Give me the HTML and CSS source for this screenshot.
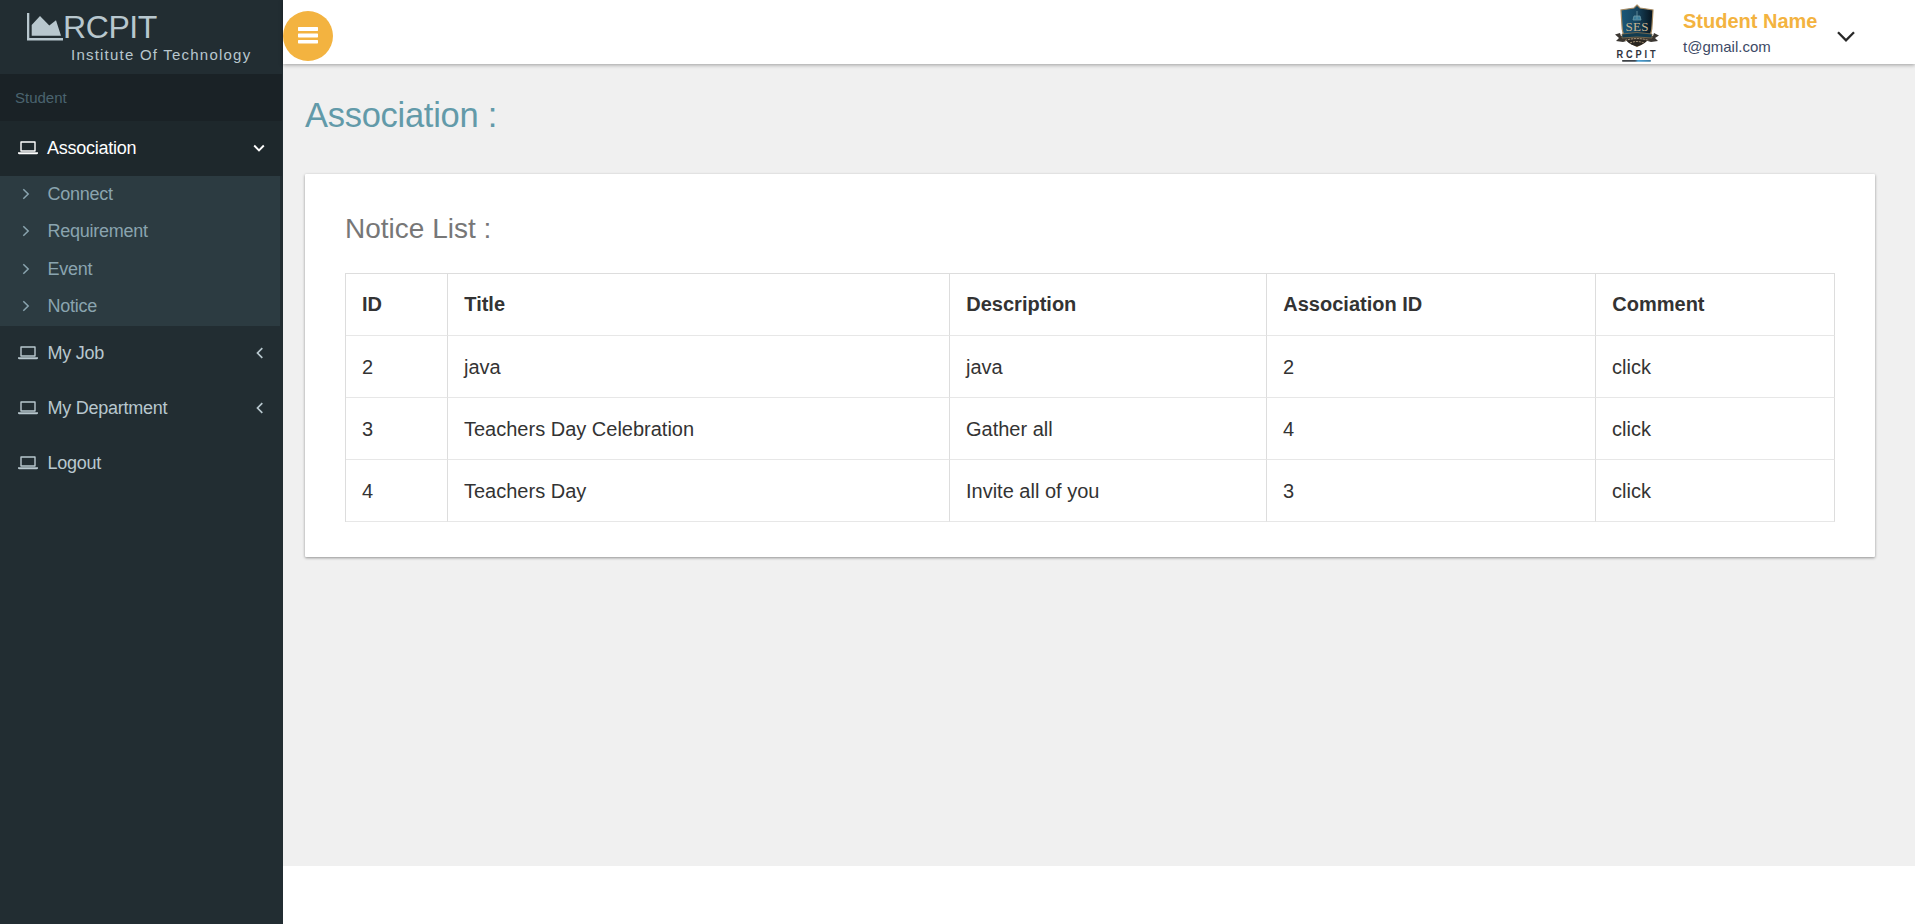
FILE: index.html
```html
<!DOCTYPE html>
<html lang="en">
<head>
<meta charset="utf-8">
<title>RCPIT - Association</title>
<link rel="stylesheet" href="styles.css">
</head>
<body>
<svg class="sprite" width="0" height="0">
  <symbol id="laptop" viewBox="0 0 20 14"><path d="M3 1h14v9H3z" fill="none" stroke="currentColor" stroke-width="1.4" stroke-linejoin="round"/><path d="M0 11.2h20v1c0 .6-.9 1-2 1H2c-1.100 0-2-.4-2-1z" fill="currentColor"/></symbol>
  <symbol id="right" viewBox="0 0 8 12"><path d="M1.300 1.200 6.200 6 1.300 10.800" fill="none" stroke="currentColor" stroke-width="1.500"/></symbol>
  <symbol id="left" viewBox="0 0 8 12"><path d="M6.300 1.200 1.500 6 6.300 10.800" fill="none" stroke="currentColor" stroke-width="1.700"/></symbol>
  <symbol id="down" viewBox="0 0 12 8"><path d="M1.200 1.500 6 6.300 10.800 1.500" fill="none" stroke="currentColor" stroke-width="1.900"/></symbol>
</svg>
<div class="app">
  <aside class="sidebar">
    <div class="brand">
      <div class="brand-name">
        <svg class="brand-icon" viewBox="0 0 36 28"><path d="M0 0h2.300v25H36v2.500H0z"/><path d="M4.700 22.800V12L13 3l9.300 9.500 6.700-5.300 5 15.600z"/></svg><span>RCPIT</span>
      </div>
      <div class="brand-sub">Institute Of Technology</div>
    </div>
    <div class="role">Student</div>
    <nav>
      <a class="item active"><svg class="laptop"><use href="#laptop"/></svg><span class="label">Association</span><svg class="caret-down"><use href="#down"/></svg></a>
      <div class="submenu">
        <a class="sub"><svg class="caret"><use href="#right"/></svg><span>Connect</span></a>
        <a class="sub"><svg class="caret"><use href="#right"/></svg><span>Requirement</span></a>
        <a class="sub"><svg class="caret"><use href="#right"/></svg><span>Event</span></a>
        <a class="sub"><svg class="caret"><use href="#right"/></svg><span>Notice</span></a>
      </div>
      <a class="item"><svg class="laptop"><use href="#laptop"/></svg><span class="label">My Job</span><svg class="caret"><use href="#left"/></svg></a>
      <a class="item"><svg class="laptop"><use href="#laptop"/></svg><span class="label">My Department</span><svg class="caret"><use href="#left"/></svg></a>
      <a class="item"><svg class="laptop"><use href="#laptop"/></svg><span class="label">Logout</span></a>
    </nav>
  </aside>
  <div class="page">
    <header class="topbar">
      <button class="toggle" aria-label="Menu"><svg width="20" height="17" viewBox="0 0 20 17"><path d="M.5 0h19l.5.500v3l-.5.500H.500L0 3.500v-3zM.5 6.500h19l.5.500v3l-.5.500H.500L0 10V7zM.5 13h19l.5.500v2.500l-.5.500H.500L0 16v-2.500z" fill="#fff"/></svg></button>
      <div class="user">
        <svg class="crest" viewBox="0 0 46 60">
          <defs>
            <linearGradient id="shield" x1="0" y1="0" x2="1" y2="0"><stop offset="0" stop-color="#195879"/><stop offset=".5" stop-color="#17445e"/><stop offset="1" stop-color="#07131c"/></linearGradient>
            <linearGradient id="line" x1="0" y1="0" x2="1" y2="0"><stop offset="0" stop-color="#3d4042"/><stop offset=".45" stop-color="#3d4651"/><stop offset=".55" stop-color="#4aa3d8"/><stop offset="1" stop-color="#3c789e"/></linearGradient>
          </defs>
          <path d="M23 2 26 5 39 7 38 23C38 34 31 40 23 43.500 15 40 8 34 8 23L7 7 20 5z" fill="url(#shield)" stroke="#a58a62" stroke-width="1.200"/>
          <path d="M10 34c4 7 8 8 13 9.500 6-2 10-4.500 13-9.500z" fill="#2b2620"/>
          <path d="M23 8v8M19 17l1-4h6l1 4z" fill="#387b99" stroke="#6f9aa6" stroke-width=".8"/>
          <text x="23" y="27.500" text-anchor="middle" font-size="13" textLength="23" class="crest-serif">SES</text>
          <path d="M1 31.500 6 30 7 33 39 33 40 30 45 32.500 41 35 44 38 37 39C28 36 18 36 9 39L2 38 5 35z" fill="#3b3732"/>
          <path d="M8 31Q23 28 38 31V35Q23 33 8 35z" fill="#123c50" stroke="#87704e" stroke-width=".8"/>
          <path d="M11 37.500q12-4 24 0M16 40q7-3 14 0" fill="none" stroke="#ac987a" stroke-width="1" stroke-dasharray="2 1"/>
          <text transform="translate(2.500 54.500) scale(.8 1)" font-size="11.500" class="crest-name">RCPIT</text>
          <rect x="8" y="57" width="29" height="1.700" rx=".8" fill="url(#line)"/>
        </svg>
        <div class="user-text"><div class="user-name">Student Name</div><div class="user-mail">t@gmail.com</div></div>
        <svg class="user-caret" viewBox="0 0 18 12"><path d="M1 1.200 9 9.300 17 1.200" fill="none" stroke="#282828" stroke-width="2.300"/></svg>
      </div>
    </header>
    <main class="content">
      <h1>Association :</h1>
      <section class="card">
        <h2>Notice List :</h2>
        <table>
          <colgroup><col class="c-id"><col class="c-title"><col class="c-desc"><col class="c-assoc"><col class="c-comment"></colgroup>
          <thead><tr><th>ID</th><th>Title</th><th>Description</th><th>Association ID</th><th>Comment</th></tr></thead>
          <tbody>
            <tr><td>2</td><td>java</td><td>java</td><td>2</td><td>click</td></tr>
            <tr><td>3</td><td>Teachers Day Celebration</td><td>Gather all</td><td>4</td><td>click</td></tr>
            <tr><td>4</td><td>Teachers Day</td><td>Invite all of you</td><td>3</td><td>click</td></tr>
          </tbody>
        </table>
      </section>
    </main>
  </div>
</div>
</body>
</html>
```

FILE: styles.css
```css
* { box-sizing: border-box; }
body { margin: 0; background: #fff; font-family: "Liberation Sans", Arial, sans-serif; color: #333; overflow: hidden; }
.sprite { position: absolute; }
.app { display: flex; height: 924px; }

.sidebar { width: 283px; flex: none; background: #222d32; color: #b8c7ce; }
.brand { height: 74px; padding: 9px 0 0 27px; }
.brand-name { display: flex; align-items: flex-start; height: 36px; font-size: 32px; line-height: 36px; letter-spacing: -.4px; }
.brand-icon { width: 36px; height: 28px; margin-top: 4px; fill: currentColor; }
.brand-sub { padding-left: 44px; font-size: 15px; line-height: 20px; letter-spacing: 1.22px; }
.role { width: 282px; height: 47px; padding-left: 15px; background: #1a2226; color: #4b646f; font-size: 15px; line-height: 47px; }
.item { display: flex; align-items: center; width: 282px; height: 55px; padding: 0 18px 0 17.500px; font-size: 18px; letter-spacing: -.25px; }
.item .label { flex: 1; }
.item.active { background: #1e282c; color: #fff; }
.item.active .label { margin-left: -.5px; }
.laptop { width: 20px; height: 14px; margin-right: 10px; margin-bottom: 2px; }
.caret { width: 8px; height: 12px; margin-bottom: 2px; }
.caret-down { width: 12px; height: 8px; margin-right: -1px; margin-bottom: 2px; }
.submenu { width: 280px; height: 150px; background: #2c3b41; color: #8aa4af; }
.sub { display: flex; align-items: center; height: 37.5px; padding: 0 0 1px 21.500px; font-size: 18px; letter-spacing: -.25px; }
.sub .caret { margin-right: 18px; margin-bottom: 1px; }

.page { flex: 1; display: flex; flex-direction: column; }
.topbar { position: relative; display: flex; justify-content: space-between; height: 64px; background: #fff; box-shadow: 0 1px 4px rgba(0, 0, 0, .35); }
.toggle { display: flex; align-items: center; justify-content: center; width: 50px; height: 50px; margin-top: 11px; padding: 0 0 1px; border: 0; border-radius: 50%; background: #f3b340; }
.user { display: flex; width: 301px; padding-top: 3px; }
.crest { width: 46px; height: 60px; flex: none; }
.crest-serif { font-family: "Liberation Serif", serif; fill: #c9b692; }
.crest-name { font-family: "Liberation Sans", sans-serif; font-weight: bold; fill: #30343e; letter-spacing: 3.6px; }
.user-text { width: 153px; padding: 7px 0 0 23px; }
.user-name { color: #f3b340; font-size: 20px; font-weight: bold; line-height: 23px; white-space: nowrap; }
.user-mail { margin-top: 5px; color: #3d4a66; font-size: 15px; line-height: 18px; }
.user-caret { width: 18px; height: 12px; margin-top: 28px; margin-left: 24px; }

.content { height: 802px; padding: 32px 40px 0 22px; background: #f0f0f0; }
h1 { margin: 0; height: 78px; color: #629aa9; font-size: 34.5px; font-weight: normal; line-height: 38px; letter-spacing: -.28px; }
.card { height: 383px; padding: 39px 40px 0; background: #fff; border-radius: 1px; box-shadow: 0 1px 3px rgba(0, 0, 0, .4); }
h2 { margin: 0; height: 60px; color: #777; font-size: 28px; font-weight: normal; line-height: 32px; }
table { width: 1490px; table-layout: fixed; border-collapse: separate; border-spacing: 0; border: solid #ddd; border-width: 1px 0 0 1px; font-size: 20px; line-height: 29px; }
th, td { height: 62px; padding: 0 16px; border-right: 1px solid #ddd; border-bottom: 1px solid #e7e7e7; text-align: left; }
th + th { padding-left: 16.300px; }
td { padding-top: 2px; }
.c-id { width: 102px; }
.c-title { width: 502px; }
.c-desc { width: 317px; }
.c-assoc { width: 329px; }
.c-comment { width: 239px; }
```
